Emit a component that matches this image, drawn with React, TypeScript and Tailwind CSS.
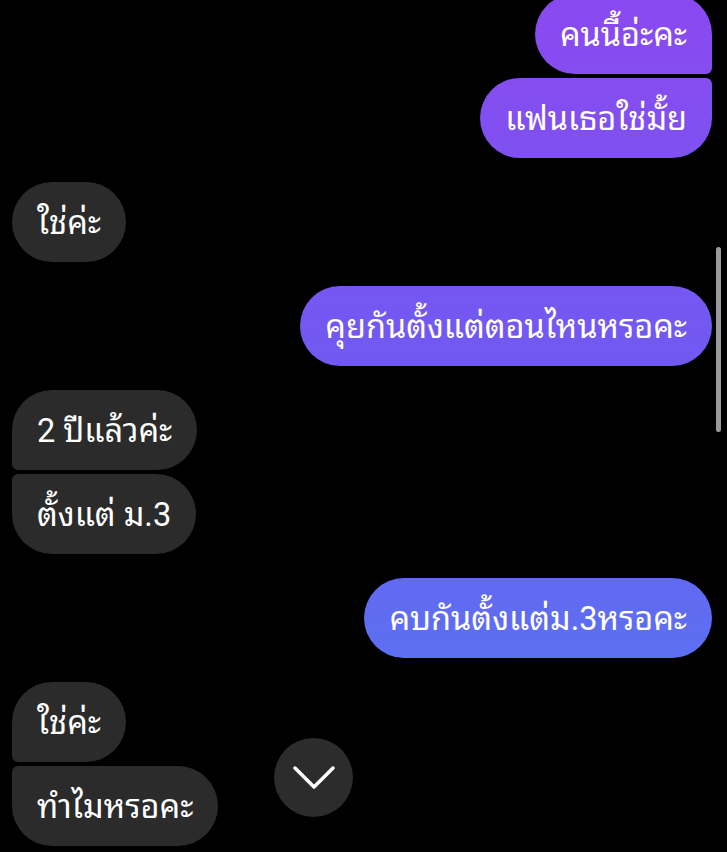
type Msg = { text: string; me: boolean };

// groups of consecutive messages from the same sender
const groups: Msg[][] = [
  [
    { text: "คนนี้อ่ะคะ", me: true },
    { text: "แฟนเธอใช่มั้ย", me: true },
  ],
  [{ text: "ใช่ค่ะ", me: false }],
  [{ text: "คุยกันตั้งแต่ตอนไหนหรอคะ", me: true }],
  [
    { text: "2 ปีแล้วค่ะ", me: false },
    { text: "ตั้งแต่ ม.3", me: false },
  ],
  [{ text: "คบกันตั้งแต่ม.3หรอคะ", me: true }],
  [
    { text: "ใช่ค่ะ", me: false },
    { text: "ทำไมหรอคะ", me: false },
  ],
];

function corners(me: boolean, i: number, n: number) {
  const first = i === 0;
  const last = i === n - 1;
  if (me) {
    return [
      "rounded-l-[40px]",
      first ? "rounded-tr-[40px]" : "rounded-tr-[6px]",
      last ? "rounded-br-[40px]" : "rounded-br-[6px]",
    ].join(" ");
  }
  return [
    "rounded-r-[40px]",
    first ? "rounded-tl-[40px]" : "rounded-tl-[6px]",
    last ? "rounded-bl-[40px]" : "rounded-bl-[6px]",
  ].join(" ");
}

export default function App() {
  return (
    <div
      className="relative h-[852px] w-full overflow-hidden bg-black text-white"
      style={{ fontFamily: 'Roboto, "Noto Sans Thai Looped", "Noto Sans Thai", "Noto Sans", sans-serif' }}
    >
      <div className="-mt-[6px] flex flex-col gap-6 px-3">
        {groups.map((g, gi) => (
          <div key={gi} className={`flex flex-col gap-1 ${g[0].me ? "items-end pr-[3px]" : "items-start"}`}>
            {g.map((m, i) => (
              <div
                key={i}
                className={`flex h-[80px] items-center px-[25px] pt-[2px] text-[32.5px] leading-none ${corners(m.me, i, g.length)} ${
                  m.me
                    ? "bg-linear-to-b from-[#8a49f0] via-[#6b5cf2] to-[#4a7ef1] bg-fixed"
                    : "bg-[#2b2b2b]"
                }`}
              >
                {m.text}
              </div>
            ))}
          </div>
        ))}
      </div>

      {/* scrollbar */}
      <div className="absolute right-[6px] top-[247px] h-[185px] w-[5px] rounded-full bg-[#9a9a9a]" />

      {/* scroll to bottom */}
      <div className="absolute left-[274px] top-[738px] flex h-[79px] w-[79px] items-center justify-center rounded-full bg-[#2c2c2c]">
        <svg width="44" height="26" viewBox="0 0 44 26" fill="none">
          <polyline
            points="3,3 22,22 41,3"
            stroke="white"
            strokeWidth="3.5"
            strokeLinecap="round"
            strokeLinejoin="round"
          />
        </svg>
      </div>
    </div>
  );
}
